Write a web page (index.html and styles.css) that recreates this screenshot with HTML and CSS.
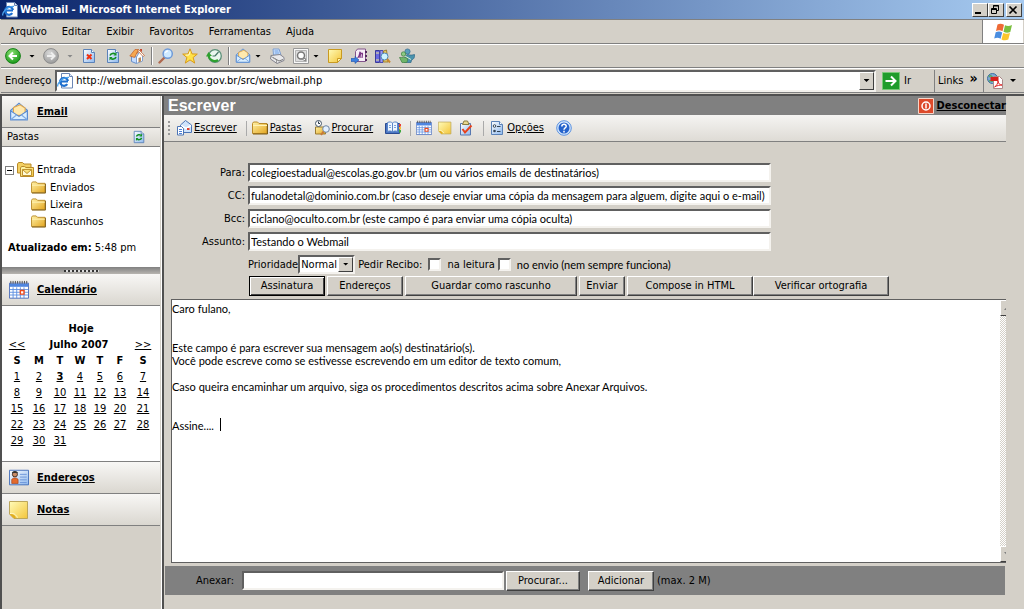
FILE: index.html
```
<!DOCTYPE html>
<html lang="pt-BR">
<head>
<meta charset="utf-8">
<title>Webmail - Microsoft Internet Explorer</title>
<link rel="stylesheet" href="styles.css">
</head>
<body>
<svg class="defs" aria-hidden="true">
  <defs>
    <linearGradient id="gBlue" x1="0" y1="0" x2="1" y2="1"><stop offset="0" stop-color="#ffffff"/><stop offset="1" stop-color="#8db8ee"/></linearGradient>
    <linearGradient id="gGold" x1="0" y1="0" x2="1" y2="1"><stop offset="0" stop-color="#fff2a8"/><stop offset="1" stop-color="#e3a51f"/></linearGradient>
    <linearGradient id="gNote" x1="0" y1="0" x2="1" y2="1"><stop offset="0" stop-color="#fffbb8"/><stop offset="1" stop-color="#f3c53a"/></linearGradient>
    <radialGradient id="gGreen" cx=".4" cy=".3" r=".7"><stop offset="0" stop-color="#8ae070"/><stop offset="1" stop-color="#1c9a1c"/></radialGradient>
    <radialGradient id="gGrey" cx=".4" cy=".3" r=".7"><stop offset="0" stop-color="#d8d8d8"/><stop offset="1" stop-color="#9c9c9c"/></radialGradient>
    <symbol id="page" viewBox="0 0 16 16"><path d="M2.500 1.500h8l3 3v10h-11z" fill="url(#gBlue)" stroke="#5b82b8"/><path d="M10.500 1.500v3h3" fill="#fff" stroke="#5b82b8"/></symbol>
    <symbol id="ie" viewBox="0 0 16 16"><path d="M4.500.5h8l3 3v11.500h-11z" fill="#fff" stroke="#6b86b4"/><path d="M12.500.5v3h3" fill="#dde8f8" stroke="#6b86b4"/><path d="M11 8.500H3.500M10.300 11.200A4 4 0 1 1 11 8" fill="none" stroke="#1d6fd0" stroke-width="2.200"/><path d="M1 13.500C-.5 11 5 4 12 4.300" fill="none" stroke="#4aa3ee" stroke-width="1.300"/></symbol>
    <symbol id="back" viewBox="0 0 16 16"><circle cx="8" cy="8" r="7.400" fill="url(#gGreen)" stroke="#188018"/><path d="M12 8H5M8 4.500L4.500 8 8 11.500" fill="none" stroke="#fff" stroke-width="2"/></symbol>
    <symbol id="fwd" viewBox="0 0 16 16"><circle cx="8" cy="8" r="7.400" fill="url(#gGrey)" stroke="#8d8d8d"/><path d="M4 8h7M8 4.500L11.500 8 8 11.500" fill="none" stroke="#eee" stroke-width="2"/></symbol>
    <symbol id="stop" viewBox="0 0 16 16"><use href="#page"/><path d="M6 6.500l4.500 4.500M10.500 6.500L6 11" stroke="#f03010" stroke-width="2"/></symbol>
    <symbol id="refresh" viewBox="0 0 16 16"><use href="#page"/><path d="M5 7.500c1-2.500 4-2.500 5-1.500M11 9c-1 2.500-4 2.500-5 1.500" fill="none" stroke="#109020" stroke-width="1.600"/><path d="M8.500 7.500h3v-3.500zM7.500 9h-3v3.500z" fill="#109020"/></symbol>
    <symbol id="home" viewBox="0 0 16 16"><path d="M2.500 8v5.500l5 2V9z" fill="#c4dcff" stroke="#6a90c8"/><path d="M7.500 15.500L13.500 13V7l-3-3-3 5z" fill="#fff" stroke="#7d9fd0"/><path d="M9.500 10l2.500-.7v4.300l-2.500 1z" fill="#b98a5a"/><path d="M.8 8L6 1.500h3.500l-4 8z" fill="#f7a850" stroke="#c0602a" stroke-width=".7"/><path d="M9.500 1.500l6 6-1.500 1-4.500-5-1.500 2z" fill="#fff" stroke="#c0602a" stroke-width=".7"/><path d="M11 1h2v3l-2-1.500z" fill="#c84830"/></symbol>
    <symbol id="search" viewBox="0 0 16 16"><path d="M6.500 9.500L1.500 14.500" stroke="#b06a50" stroke-width="2.400" stroke-linecap="round"/><circle cx="9.700" cy="5.700" r="4.600" fill="#cfeaff" stroke="#6e9ad8" stroke-width="1.500"/><path d="M7.500 5a2.400 2.400 0 0 1 2.400-2" fill="none" stroke="#fff" stroke-width="1.300"/></symbol>
    <symbol id="star" viewBox="0 0 16 16"><path d="M8 .8l2 5.100 5.300.2-4.200 3.400 1.600 5.600L8 11.900l-4.700 3.200 1.600-5.600L.7 6.100 6 5.900z" fill="#ffe24a" stroke="#d99a18"/><path d="M8 3.500L7 7 3.500 7.200" fill="none" stroke="#fffbd0"/></symbol>
    <symbol id="history" viewBox="0 0 16 16"><circle cx="9" cy="8" r="6.300" fill="#e9f6ee" stroke="#5b8f78" stroke-width="1.300"/><path d="M9 8l3.500-4M9 8H6.500" stroke="#476" stroke-width="1.200"/><path d="M2.500 7c.5 5 5.500 7.500 9.500 5" fill="none" stroke="#2ea02e" stroke-width="2.200"/><path d="M0 8.500L2.500 4 6 8z" fill="#2ea02e"/></symbol>
    <symbol id="mail" viewBox="0 0 18 18"><path d="M1.500 7.500L9 1l7.500 6.500v8.500h-15z" fill="#a9d2fa" stroke="#5688cf"/><path d="M4 5l6-2.500 4.500 3V12H4z" fill="#ffe9ae" stroke="#e2a64a"/><path d="M1.500 8l7.500 5 7.500-5v8h-15z" fill="#d9eeff" stroke="#5688cf"/><path d="M1.500 16L7 11.500M16.500 16L11 11.500" stroke="#7ea9df"/></symbol>
    <symbol id="print" viewBox="0 0 16 16"><path d="M4.500 7L4 1h6l2 6z" fill="#cfe4ff" stroke="#80a0d0"/><path d="M5.500 3h4M5.700 5h4.500" stroke="#6b9be0"/><path d="M2 7.500l9-1 4 3v3L8 15.500 1.500 11z" fill="#e9e9ec" stroke="#85858f"/><path d="M4 9.500l6 3.500 4-1.500" fill="none" stroke="#777"/><path d="M1.500 8l6 4v3" fill="none" stroke="#999"/></symbol>
    <symbol id="edit" viewBox="0 0 16 16"><path d="M.5.500h15v15H.500z" fill="#f8f8f8" stroke="#999"/><path d="M2.500 2.500h11v11h-11z" fill="#ddd" stroke="#b5b5b5"/><circle cx="8" cy="7.500" r="3.500" fill="#fff" stroke="#777" stroke-width="1.500"/><path d="M8 10.500h4.500V13z" fill="#fff" stroke="#888"/></symbol>
    <symbol id="note" viewBox="0 0 16 16"><path d="M1.500 1.500h13v9l-4 4h-9z" fill="url(#gNote)" stroke="#c99a20"/><path d="M14.500 10.500h-4v4z" fill="#fff4b0" stroke="#c99a20"/></symbol>
    <symbol id="sticky" viewBox="0 0 20 20"><path d="M.5 1.500h18v17H5l-4.500-4.500z" fill="url(#gNote)" stroke="#bca65a"/><path d="M.5 14c3-.5 5 .5 6.500 3.500l-2 1z" fill="#e1ad20"/><path d="M1 13.500c4-.7 6 1.500 7.500 4" fill="none" stroke="#fffbd0"/></symbol>
    <symbol id="onenote" viewBox="0 0 16 16"><path d="M4.500 3.500l2-2.500h8v12.500h-10z" fill="#f7eef7" stroke="#83558b"/><path d="M15 3v2M15 7v2M15 11v2" stroke="#552860" stroke-width="2"/><path d="M6.500 10c2-1 2-4 2.500-6 1 0 0 4 0 6M9 7.500c1-2.500 2.500-3 2.500-1.500L11 10" fill="none" stroke="#7a3484" stroke-width="1.200"/><path d="M0 10.500h4V8.500L8 12l-4 3.500v-2H0z" fill="#3c80e0" stroke="#1c50a8" stroke-width=".6"/></symbol>
    <symbol id="research" viewBox="0 0 16 16"><path d="M.5 2.500h4v12h-4z" fill="#6a6ae0" stroke="#3a3a98"/><path d="M5 2.500h3v12H5z" fill="#9b9bf0" stroke="#4c4cae"/><path d="M8.500 3l3-1 1.500 12H8.500z" fill="#e8c860" stroke="#9c8034"/><path d="M1 5h3M1 12h3" stroke="#f0e890"/><circle cx="9.500" cy="8.500" r="3.500" fill="#cdf3ff" stroke="#4a86b8"/><path d="M12 11l3 3.500" stroke="#c88830" stroke-width="2"/></symbol>
    <symbol id="msn" viewBox="0 0 16 16"><circle cx="8.500" cy="3.500" r="2.600" fill="#5a9fbb" stroke="#356c92" stroke-width=".7"/><path d="M9 6.500c2.500 1 4 .5 6.500 0 .5 3-1 5-3 5.500l-.5 2.500H5.500l1-7z" fill="#4a93ad" stroke="#2f6586" stroke-width=".7"/><circle cx="4.500" cy="6" r="2.200" fill="#8ccb84" stroke="#3f8040" stroke-width=".7"/><path d="M.5 9.500c3 0 5-.5 7.500.5 1 1.500.5 3.500-.5 4.500H3z" fill="#70b56a" stroke="#3f8040" stroke-width=".7"/><path d="M6 8l6 3.500" stroke="#d8f0d0"/></symbol>
    <symbol id="go" viewBox="0 0 18 18"><path d="M.5.500h17v17H.500z" fill="#1f9c2c" stroke="#78c878"/><path d="M3.500 9h10M9 4.500L13.500 9 9 13.500" fill="none" stroke="#fff" stroke-width="2"/></symbol>
    <symbol id="pdf" viewBox="0 0 16 16"><circle cx="5.500" cy="5.500" r="5" fill="#7da9d6" stroke="#3e6f9f"/><path d="M2 4c2-3 3 1 4 0M2 8c2-1 3 1 4 0" fill="none" stroke="#5aa566" stroke-width="1.500"/><path d="M6.500 3.500h6l3 3v9h-9z" fill="#fff" stroke="#a88"/><path d="M3.500 4h8v4h-8z" fill="#d8201c"/><path d="M7.500 14c2-1 3.500-4 3.500-6 .5 3 2 4 4 4-2 0-5 .500-7.500 2z" fill="none" stroke="#e02020"/></symbol>
    <symbol id="flag" viewBox="0 0 20 18"><path d="M4.500 1.500c2-1 4-1 6.500.3L9.500 8.300C7.500 7 5.500 7 3 8z" fill="#ee6a36"/><path d="M12 2.300c2 1 4.500 1 7-.2L17.300 9c-2.300 1-4.500.9-6.800-.2z" fill="#7bbf3e"/><path d="M2.700 9.200c2.500-1 4.500-1 6.500.3l-1.600 6.300c-2-1.200-4-1.200-6.400-.3z" fill="#4a8de0"/><path d="M10.200 10c2.300 1 4.500 1 6.800.1l-1.700 6.500c-2.300 1-4.500.9-6.800-.2z" fill="#fbc62c"/></symbol>
    <symbol id="folder" viewBox="0 0 16 14"><path d="M.5 2.500l1-1.500h4l1.500 1.500h8v10H.5z" fill="url(#gGold)" stroke="#b98a28"/><path d="M1 4.500h14" stroke="#fff3b8"/><path d="M15.500 3v10H1" fill="none" stroke="#7e5c14"/></symbol>
    <symbol id="inbox" viewBox="0 0 17 16"><path d="M.5 2l1-1.500h4L7 2h7v9H.5z" fill="#f2cf62" stroke="#b98a28"/><path d="M3.500 6l1-1.500h3L9 5.500h7.500v9h-13z" fill="url(#gNote)" stroke="#b98a28"/><path d="M5.500 7.500h9v6h-9zM5.500 7.500l4.500 4 4.500-4" fill="#fffbd8" stroke="#c09430"/></symbol>
    <symbol id="cal" viewBox="0 0 22 20"><path d="M.5 2.500h21v16.500H.5z" fill="#fff" stroke="#4468b8"/><path d="M1 3h20v3.500H1z" fill="#4f86e0"/><path d="M1 9.500h20M1 12.500h20M1 15.500h20M4.500 7v12M8.500 7v12M12.500 7v12M16.500 7v12" stroke="#5a8de0"/><path d="M2 0v3M4.500 0v3M7 0v3M9.500 0v3M12 0v3M14.500 0v3M17 0v3M19.500 0v3" stroke="#444"/><path d="M12.500 10.500h4v4h-4z" fill="#fff" stroke="#f04818" stroke-width="1.500"/></symbol>
    <symbol id="card" viewBox="0 0 22 18"><path d="M.5.500h21v16H.500z" fill="url(#gBlue)" stroke="#3e6ab8"/><path d="M12 5h7.500M12 8h7.500M12 11h7.500M12 14h7.500" stroke="#6b94d8"/><circle cx="6.500" cy="5" r="2.800" fill="#c98b66" stroke="#3a2a20"/><path d="M3 3.500c1-3 6-3 7 0z" fill="#333"/><path d="M3 15V10.500l2-1.500h3l2 1.500V15z" fill="#e46a2c" stroke="#a04018" stroke-width=".7"/></symbol>
    <symbol id="power" viewBox="0 0 16 16"><path d="M.5.500h15v15H.500z" fill="#dd4a2a" stroke="#f6d5c8"/><circle cx="8" cy="8" r="4" fill="none" stroke="#fff" stroke-width="1.500"/><path d="M8 5.500v5" stroke="#fff" stroke-width="1.500"/></symbol>
    <symbol id="compose" viewBox="0 0 16 16"><path d="M4.500 5l5-4.500 6 4.500v7.500h-11z" fill="#cfe3fb" stroke="#4c74b4"/><path d="M5 5.500l5 3 5-3" fill="none" stroke="#fff" stroke-width="1.500"/><path d="M11 8h2.500v2H11z" fill="#e04030"/><path d="M1.500 6.500h4l2 2v6.500h-6z" fill="#fff" stroke="#4c74b4"/><path d="M3 9.500h3M3 11.500h3M3 13.500h3" stroke="#4c80d8"/></symbol>
    <symbol id="find" viewBox="0 0 16 16"><path d="M1.500 7h10v7h-10z" fill="url(#gGold)" stroke="#9a7a30"/><circle cx="4.500" cy="3.500" r="3" fill="#fff" stroke="#456"/><path d="M4.500 1.500v2h1.500" fill="none" stroke="#234"/><circle cx="12" cy="9" r="3.300" fill="#e4f1ff" stroke="#6f86a4"/><path d="M9.500 11.500L7 15" stroke="#c87838" stroke-width="2"/></symbol>
    <symbol id="book" viewBox="0 0 16 14"><path d="M.5 2.500h14v10H.5z" fill="#4a76c4" stroke="#2a4a90"/><path d="M2.500 1.500c2-1 4-.5 5 .5v9c-1-1-3-1.500-5-.5zM7.500 2c1-1 3-1.500 5-.5v9c-2-1-4-.5-5 .5z" fill="#eef6ff" stroke="#5c86c8"/><path d="M4 4.500h2M4 6.500h2M9 4.500h2M9 6.500h2" stroke="#77a3e0"/><path d="M14 3h2v2.500h-2z" fill="#e84030"/><path d="M14 6h2v2.500h-2z" fill="#f4c030"/><path d="M14 9h2v2.500h-2z" fill="#40a840"/></symbol>
    <symbol id="task" viewBox="0 0 16 16"><path d="M2.500 3.500h10v11.500h-10z" fill="url(#gBlue)" stroke="#5878b0"/><path d="M4.500 4.500L6 1h3.500L11 4.500z" fill="#e8d890" stroke="#8c7c40"/><path d="M4.500 9L7 12.500l6.500-7" fill="none" stroke="#e8421c" stroke-width="2"/></symbol>
    <symbol id="opts" viewBox="0 0 16 16"><use href="#page"/><circle cx="5.500" cy="6" r="1.300" fill="#fff" stroke="#345"/><circle cx="5.500" cy="11" r="1.300" fill="#345"/><path d="M8 6.500h3.500M8 11.500h3.500" stroke="#345"/></symbol>
    <symbol id="help" viewBox="0 0 16 16"><circle cx="8" cy="8" r="7.300" fill="#d4e6fc" stroke="#5b92e0"/><circle cx="8" cy="8" r="5.500" fill="#2563cc"/><path d="M5.800 6.500C6 3.500 10.500 3.700 10.200 6.500 10 8 8 7.800 8 9.700M8 10.700v1.800" fill="none" stroke="#fff" stroke-width="1.500"/></symbol>
  </defs>
</svg>

<div class="window">
  <header class="chrome">
    <div class="titlebar">
      <svg class="i16"><use href="#ie"/></svg>
      <span class="window-title">Webmail - Microsoft Internet Explorer</span>
      <div class="window-buttons">
        <button class="winbtn" aria-label="Minimizar"><svg viewBox="0 0 12 10"><path d="M2 8h6" stroke="#000" stroke-width="2"/></svg></button>
        <button class="winbtn" aria-label="Restaurar"><svg viewBox="0 0 12 10"><path d="M4.500 3V.500h5v5H8M4 1h6" fill="none" stroke="#000"/><path d="M2.500 3.500h5v5h-5zM2 4.500h6" fill="none" stroke="#000"/></svg></button>
        <button class="winbtn winbtn-close" aria-label="Fechar"><svg viewBox="0 0 12 10"><path d="M2.500 1.500l7 7M9.500 1.500l-7 7" stroke="#000" stroke-width="1.700"/></svg></button>
      </div>
    </div>
    <div class="menubar">
      <nav class="menus">
        <button>Arquivo</button><button>Editar</button><button>Exibir</button><button>Favoritos</button><button>Ferramentas</button><button>Ajuda</button>
      </nav>
      <div class="throbber"><svg class="flag"><use href="#flag"/></svg></div>
    </div>
    <div class="iebar">
      <svg class="i16"><use href="#back"/></svg><span class="caret"></span>
      <svg class="i16"><use href="#fwd"/></svg><span class="caret caret-off"></span>
      <svg class="i16"><use href="#stop"/></svg>
      <svg class="i16"><use href="#refresh"/></svg>
      <svg class="i16"><use href="#home"/></svg>
      <span class="sep"></span>
      <svg class="i16"><use href="#search"/></svg>
      <svg class="i16"><use href="#star"/></svg>
      <svg class="i16"><use href="#history"/></svg>
      <span class="sep"></span>
      <svg class="i16"><use href="#mail"/></svg><span class="caret caret-near"></span>
      <svg class="i16"><use href="#print"/></svg>
      <svg class="i16"><use href="#edit"/></svg><span class="caret caret-near"></span>
      <svg class="i16"><use href="#note"/></svg>
      <svg class="i16"><use href="#onenote"/></svg>
      <svg class="i16"><use href="#research"/></svg>
      <svg class="i16"><use href="#msn"/></svg>
    </div>
    <div class="addressbar">
      <label for="url">Endereço</label>
      <div class="urlbox">
        <svg class="i16"><use href="#ie"/></svg>
        <input id="url" type="text" value="http://webmail.escolas.go.gov.br/src/webmail.php">
        <button class="dropbtn" aria-label="Abrir lista"><span class="caret"></span></button>
      </div>
      <button class="go"><svg class="i18"><use href="#go"/></svg>Ir</button>
      <div class="links"><span>Links</span><b>»</b></div>
      <div class="pdf"><svg class="i16"><use href="#pdf"/></svg><span class="caret"></span></div>
    </div>
  </header>

  <div class="content">
    <aside class="sidebar">
      <h2 class="panel-head"><svg class="ico-head"><use href="#mail"/></svg><a href="#">Email</a></h2>
      <div class="subhead"><span>Pastas</span><svg class="i14"><use href="#refresh"/></svg></div>
      <section class="folders">
        <ul class="tree">
          <li class="root"><button class="toggle" aria-label="Recolher"></button><svg class="inbox"><use href="#inbox"/></svg>Entrada</li>
          <li><svg class="folder"><use href="#folder"/></svg>Enviados</li>
          <li><svg class="folder"><use href="#folder"/></svg>Lixeira</li>
          <li><svg class="folder"><use href="#folder"/></svg>Rascunhos</li>
        </ul>
        <p class="updated"><b>Atualizado em:</b> 5:48 pm</p>
      </section>
      <div class="splitter"><span></span></div>
      <h2 class="panel-head"><svg class="ico-head"><use href="#cal"/></svg><a href="#">Calendário</a></h2>
      <section class="calendar">
        <table>
          <colgroup><col class="w22"><col class="w22"><col class="w20"><col class="w20"><col class="w20"><col class="w20"><col class="w26"></colgroup>
          <thead>
            <tr><th colspan="7">Hoje</th></tr>
            <tr><td><a href="#">&lt;&lt;</a></td><th colspan="5">Julho 2007</th><td><a href="#">&gt;&gt;</a></td></tr>
            <tr><th>S</th><th>M</th><th>T</th><th>W</th><th>T</th><th>F</th><th>S</th></tr>
          </thead>
          <tbody>
            <tr><td><a href="#">1</a></td><td><a href="#">2</a></td><td><a href="#"><b>3</b></a></td><td><a href="#">4</a></td><td><a href="#">5</a></td><td><a href="#">6</a></td><td><a href="#">7</a></td></tr>
            <tr><td><a href="#">8</a></td><td><a href="#">9</a></td><td><a href="#">10</a></td><td><a href="#">11</a></td><td><a href="#">12</a></td><td><a href="#">13</a></td><td><a href="#">14</a></td></tr>
            <tr><td><a href="#">15</a></td><td><a href="#">16</a></td><td><a href="#">17</a></td><td><a href="#">18</a></td><td><a href="#">19</a></td><td><a href="#">20</a></td><td><a href="#">21</a></td></tr>
            <tr><td><a href="#">22</a></td><td><a href="#">23</a></td><td><a href="#">24</a></td><td><a href="#">25</a></td><td><a href="#">26</a></td><td><a href="#">27</a></td><td><a href="#">28</a></td></tr>
            <tr><td><a href="#">29</a></td><td><a href="#">30</a></td><td><a href="#">31</a></td><td></td><td></td><td></td><td></td></tr>
          </tbody>
        </table>
      </section>
      <h2 class="panel-head"><svg class="ico-head"><use href="#card"/></svg><a href="#">Endereços</a></h2>
      <h2 class="panel-head"><svg class="ico-head"><use href="#sticky"/></svg><a href="#">Notas</a></h2>
    </aside>

    <main class="main">
      <div class="pagehead">
        <h1>Escrever</h1>
        <a class="logout" href="#"><svg class="i16"><use href="#power"/></svg><span>Desconectar</span></a>
      </div>
      <nav class="toolbar">
        <span class="grip"></span>
        <a class="tool" href="#"><svg class="i16"><use href="#compose"/></svg><span>Escrever</span></a>
        <span class="bar"></span>
        <a class="tool" href="#"><svg class="i16"><use href="#folder"/></svg><span>Pastas</span></a>
        <a class="tool tool-find" href="#"><svg class="i16"><use href="#find"/></svg><span>Procurar</span></a>
        <a class="tool tool-book" href="#" aria-label="Catálogo"><svg class="i16"><use href="#book"/></svg></a>
        <span class="bar"></span>
        <a class="tool" href="#" aria-label="Calendário"><svg class="i16"><use href="#cal"/></svg></a>
        <a class="tool" href="#" aria-label="Notas"><svg class="i14"><use href="#sticky"/></svg></a>
        <a class="tool" href="#" aria-label="Tarefas"><svg class="i16"><use href="#task"/></svg></a>
        <span class="bar"></span>
        <a class="tool" href="#"><svg class="i16"><use href="#opts"/></svg><span>Opções</span></a>
        <a class="tool tool-help" href="#" aria-label="Ajuda"><svg class="i16"><use href="#help"/></svg></a>
      </nav>

      <form class="compose">
        <div class="fields">
          <label for="to">Para:</label><input class="inset" id="to" type="text" value="colegioestadual@escolas.go.gov.br (um ou vários emails de destinatários)">
          <label for="cc">CC:</label><input class="inset" id="cc" type="text" value="fulanodetal@dominio.com.br (caso deseje enviar uma cópia da mensagem para alguem, digite aqui o e-mail)">
          <label for="bcc">Bcc:</label><input class="inset" id="bcc" type="text" value="ciclano@oculto.com.br (este campo é para enviar uma cópia oculta)">
          <label for="subject">Assunto:</label><input class="inset" id="subject" type="text" value="Testando o Webmail">
        </div>
        <div class="options">
          <label for="priority">Prioridade</label>
          <span class="selectbox"><select id="priority"><option>Normal</option></select><i class="selectarrow"><span class="caret"></span></i></span>
          <span class="receipt">Pedir Recibo:</span>
          <input id="onread" type="checkbox"><label for="onread">na leitura</label>
          <input id="onsend" type="checkbox"><label for="onsend">no envio (nem sempre funciona)</label>
        </div>
        <div class="actions">
          <button type="button" class="btn btn-default w76">Assinatura</button>
          <button type="button" class="btn w76">Endereços</button>
          <button type="button" class="btn w172">Guardar como rascunho</button>
          <button type="button" class="btn w46">Enviar</button>
          <div class="pair"><button type="button" class="btn w126">Compose in HTML</button><button type="button" class="btn w136">Verificar ortografia</button></div>
        </div>
        <div class="editor">
          <textarea aria-label="Mensagem">Caro fulano,


Este campo é para escrever sua mensagem ao(s) destinatário(s).
Você pode escreve como se estivesse escrevendo em um editor de texto comum,

Caso queira encaminhar um arquivo, siga os procedimentos descritos acima sobre Anexar Arquivos.


Assine....</textarea>
          <span class="textcursor"></span>
          <div class="scrollbar"><span class="scrollend scroll-up"></span><span class="scrolltrack"></span><span class="scrollend scroll-down"></span></div>
        </div>
        <div class="attach">
          <label for="file">Anexar:</label>
          <input class="inset" id="file" type="text">
          <button type="button" class="btn btn-browse">Procurar...</button>
          <button type="button" class="btn btn-add">Adicionar</button>
          <span>(max. 2 M)</span>
        </div>
      </form>
    </main>
  </div>
</div>
</body>
</html>
```
FILE: styles.css
```
* { box-sizing: border-box; }
body {
  margin: 0;
  background: #d4d0c8;
  color: #000;
  font: 11px/16px "DejaVu Sans Condensed", Tahoma, sans-serif;
}
button, input, select, textarea { font: inherit; color: inherit; }
a { color: #000; }
svg { flex: none; display: block; }
.defs { position: absolute; width: 0; height: 0; }
.i14 { width: 14px; height: 14px; }
.i16 { width: 16px; height: 16px; }
.i18 { width: 18px; height: 18px; }
.window { display: flex; flex-direction: column; min-height: 100vh; }

/* Browser chrome */
.titlebar {
  display: flex; align-items: center; gap: 2px;
  height: 19px; padding: 0 2px;
  background: linear-gradient(90deg, #0a246a, #a6caf0);
}
.window-title { color: #fff; font-weight: bold; }
.window-buttons { display: flex; margin-left: auto; }
.winbtn {
  width: 16px; height: 14px; padding: 0;
  background: #d4d0c8; border: 1px solid; border-color: #fff #404040 #404040 #fff;
}
.winbtn svg { width: 12px; height: 10px; }
.winbtn-close { margin-left: 2px; }
.menubar, .iebar, .addressbar {
  display: flex; align-items: center;
  height: 24px; border-bottom: 1px solid #808080;
}
.menubar { height: 25px; border-top: 1px solid #808080; margin-left: 1px; }
.iebar, .addressbar { border-top: 1px solid #fff; margin-left: 1px; }
.menus { display: flex; flex: 1; gap: 15px; padding-left: 8px; }
.menus button { padding: 0; border: 0; background: none; }
.throbber {
  display: flex; align-items: center; justify-content: center; align-self: stretch;
  width: 41px; margin-right: 1px; background: #fff; border-left: 1px solid #808080;
}
.flag { width: 20px; height: 18px; }
.iebar { gap: 8px; padding-left: 4px; }
.caret { flex: none; width: 6px; height: 3px; background: #000; clip-path: polygon(0 0, 100% 0, 50% 100%); }
.caret-off { background: #888; }
.caret-near { margin-left: -4px; }
.sep { width: 2px; height: 18px; margin: 0 -3px 0 -2px; border-left: 1px solid #808080; border-right: 1px solid #fff; }
.addressbar { height: 25px; padding-left: 4px; }
.urlbox {
  display: flex; flex: 1; align-items: center; gap: 3px; height: 22px;
  margin: 0 6px 0 4px; background: #fff;
  border: 2px solid; border-color: #606060 #f4f2ee #f4f2ee #606060;
}
.urlbox input { flex: 1; min-width: 0; padding: 0; border: 0; outline: 0; background: none; }
.dropbtn {
  display: flex; align-items: center; justify-content: center;
  width: 15px; height: 18px; padding: 0; background: #d4d0c8;
  border: 1px solid; border-color: #fff #404040 #404040 #fff;
}
.go { display: flex; align-items: center; gap: 4px; width: 52px; padding: 0; border: 0; background: none; }
.links { display: flex; align-items: center; gap: 6px; width: 49px; height: 22px; padding-left: 3px; border-left: 1px solid #808080; }
.links b { font-size: 14px; line-height: 14px; margin-bottom: 6px; }
.pdf { display: flex; align-items: center; gap: 7px; width: 41px; height: 22px; padding-left: 3px; border-left: 1px solid #808080; }

/* Page frame */
.content {
  display: flex; flex: 1;
  margin-top: 1px; border-top: 2px solid #505050; border-left: 2px solid #505050;
}
.sidebar { flex: none; width: 158px; }
.panel-head {
  display: flex; align-items: center; gap: 8px;
  height: 32px; margin: 0; padding-left: 7px;
  font-size: 11px; font-weight: bold;
  background: linear-gradient(#f8f7f5, #dad7d0); border-bottom: 1px solid #808080;
}
.ico-head { width: 20px; height: 20px; }
.subhead {
  display: flex; align-items: center; justify-content: space-between;
  height: 19px; padding: 0 14px 0 5px;
  background: linear-gradient(#eeece8, #dad7d0); border-bottom: 1px solid #808080;
}
.folders { height: 120px; padding: 14px 3px 0; background: #fff; }
.tree { margin: 0; padding: 0; list-style: none; }
.tree li { display: flex; align-items: center; gap: 4px; height: 17px; padding-left: 26px; }
.tree .root { padding-left: 0; gap: 3px; height: 18px; }
.toggle {
  width: 9px; height: 9px; padding: 0; border: 1px solid #808080;
  background: linear-gradient(#000, #000) center / 5px 1px no-repeat #fff;
}
.inbox { width: 17px; height: 16px; }
.folder { width: 15px; height: 13px; }
.updated { margin: 10px 0 0 3px; }
.splitter { display: flex; align-items: center; justify-content: center; height: 7px; background: linear-gradient(#808080, #b8b5b0); }
.splitter span { width: 35px; height: 2px; background: repeating-linear-gradient(90deg, #333 0 2px, #ddd 2px 4px); }
.calendar { height: 156px; padding: 15px 0 0 4px; background: #fff; border-bottom: 1px solid #808080; }
.calendar table { border-collapse: collapse; table-layout: fixed; width: 150px; text-align: center; }
.calendar th, .calendar td { height: 16px; padding: 0; line-height: 16px; }
.w20 { width: 20px; }
.w22 { width: 22px; }
.w26 { width: 26px; }

.main { flex: 1; min-width: 0; margin-left: 2px; padding-right: 18px; border-left: 2px solid #505050; box-shadow: -1px 0 #fff; }
.pagehead { display: flex; align-items: center; justify-content: space-between; height: 19px; padding-left: 4px; background: #808080; }
.pagehead h1 { margin: 0; color: #fff; font: bold 16px/19px "Liberation Sans", Arial, sans-serif; }
.logout { display: flex; align-items: center; gap: 3px; font-weight: bold; }
.toolbar {
  display: flex; align-items: center; gap: 6px; height: 27px; padding-left: 4px;
  background: linear-gradient(#f5f4f2, #dedbd5); border-bottom: 1px solid #808080;
}
.grip { width: 2px; height: 15px; background: repeating-linear-gradient(#999 0 2px, transparent 2px 4px); }
.tool { display: flex; align-items: center; gap: 2px; }
.tool-find { margin-left: 6px; }
.tool-book { margin-left: 6px; }
.tool-help { margin-left: 6px; }
.bar { width: 1px; height: 15px; margin: 0 -1px 0 3px; background: #aaa; }

/* Message form */
.fields {
  display: grid; grid-template-columns: 81px minmax(0, 523px); grid-auto-rows: 19px;
  gap: 4px 3px; align-items: center; padding-top: 21px;
}
.fields label { text-align: right; }
.inset {
  width: 100%; height: 19px; padding: 0 1px; background: #fff; border-radius: 0; outline: 0;
  font-family: Lato, Tahoma, sans-serif;
  border: 2px solid; border-color: #606060 #f4f2ee #f4f2ee #606060;
}
.options { display: flex; align-items: center; height: 18px; margin-top: 4px; padding-left: 84px; white-space: nowrap; }
.options > label, .receipt { align-self: flex-end; }
.options > label:last-child { font-family: Lato, Tahoma, sans-serif; }
.selectbox {
  display: flex; align-items: center; width: 57px; height: 19px; background: #fff;
  border: 2px solid; border-color: #606060 #f4f2ee #f4f2ee #606060;
}
.selectbox select { flex: 1; min-width: 0; height: 15px; padding: 0 0 0 1px; border: 0; appearance: none; background: none; line-height: 15px; }
.selectarrow {
  display: flex; align-items: center; justify-content: center; width: 15px; height: 15px;
  background: #d4d0c8; border: 1px solid; border-color: #fff #404040 #404040 #fff;
}
.receipt { margin: 0 6px 0 3px; }
.options input {
  appearance: none; width: 13px; height: 13px; margin: 0 6px 0 0; background: #fff;
  border: 2px solid; border-color: #606060 #f4f2ee #f4f2ee #606060;
}
.options input + label { margin-right: 3px; }
.actions { display: flex; gap: 2px; margin-top: 3px; padding-left: 85px; }
.pair { display: flex; }
.btn {
  height: 20px; padding: 0; background: #d4d0c8; border-radius: 0; line-height: 16px; white-space: nowrap;
  border: 1px solid; border-color: #fff #404040 #404040 #fff; box-shadow: inset -1px -1px #808080;
}
.btn-default { border-color: #000; box-shadow: inset 1px 1px #fff, inset -1px -1px #404040; }
.w46 { width: 46px; }
.w76 { width: 76px; }
.w126 { width: 126px; }
.w136 { width: 136px; }
.w172 { width: 172px; }
.editor {
  position: relative; display: flex; height: 264px; margin: 3px 0 3px 7px;
  background: #fff; border: 1px solid #606060; border-right: 0;
}
.editor textarea {
  flex: 1; min-width: 0; padding: 2px 0 0; border: 0; outline: 0; resize: none;
  background: none; font-family: Lato, Tahoma, sans-serif; line-height: 13px; overflow: hidden;
}
.textcursor { position: absolute; left: 48px; top: 118px; width: 1px; height: 13px; background: #000; }
.scrollbar { display: flex; flex-direction: column; width: 6px; overflow: hidden; }
.scrollend { width: 16px; height: 16px; border: 1px solid; border-color: #fff #404040 #404040 #fff; background: #d4d0c8; }
.scrollend::after { content: ""; display: block; width: 7px; height: 4px; margin: 5px 3px; background: #808080; clip-path: polygon(50% 0, 100% 100%, 0 100%); }
.scroll-down::after { clip-path: polygon(0 0, 100% 0, 50% 100%); }
.scrolltrack { flex: 1; background: repeating-conic-gradient(#d4d0c8 0 25%, #fff 0 50%) 0 0 / 2px 2px; }
.attach { display: flex; align-items: center; height: 29px; margin: 0 1px; padding-left: 31px; background: #808080; white-space: nowrap; }
.attach label { width: 46px; }
.attach .inset { flex: 0 1 262px; min-width: 0; margin-right: 2px; }
.btn-browse { width: 74px; }
.btn-add { width: 66px; margin: 0 3px 0 8px; }
```
